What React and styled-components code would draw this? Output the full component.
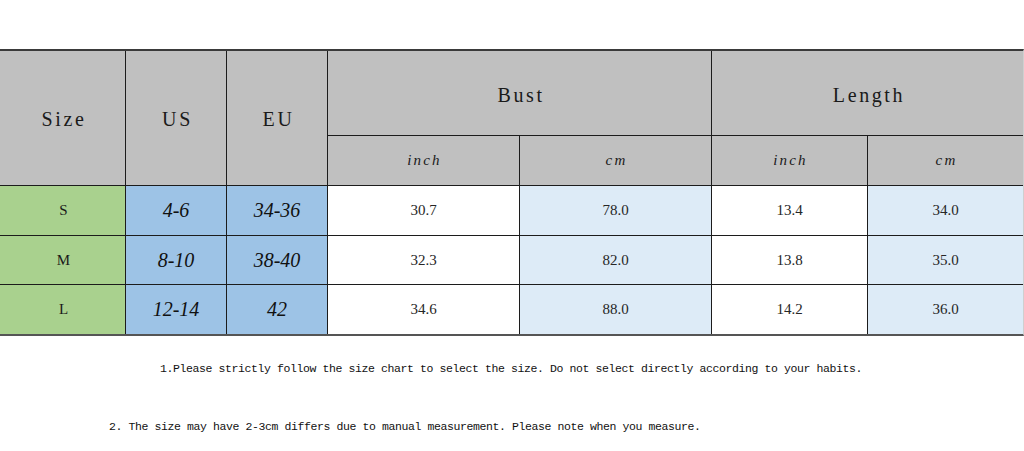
import styled, { createGlobalStyle } from "styled-components";

const GlobalStyle = createGlobalStyle`
  html, body {
    margin: 0;
    padding: 0;
    background: #ffffff;
  }
`;

const rows = [
  { size: "S", us: "4-6", eu: "34-36", bustIn: "30.7", bustCm: "78.0", lenIn: "13.4", lenCm: "34.0" },
  { size: "M", us: "8-10", eu: "38-40", bustIn: "32.3", bustCm: "82.0", lenIn: "13.8", lenCm: "35.0" },
  { size: "L", us: "12-14", eu: "42", bustIn: "34.6", bustCm: "88.0", lenIn: "14.2", lenCm: "36.0" },
];

const Page = styled.div`
  width: 1024px;
  height: 451px;
  overflow: hidden;
  padding-top: 49px;
  box-sizing: border-box;
  background: #ffffff;
`;

const Table = styled.div`
  display: grid;
  width: 1023px;
  grid-template-columns: 125px 100px 100px 191px 191px 155px 155px;
  grid-template-rows: 84px 49px 49px 48px 49px;
  gap: 1px;
  background: #1c1c1c;
  border-top: 2px solid #3a3a3a;
  border-bottom: 2px solid #555555;
  border-right: 1px solid #cfcfcf;
`;

const Row = styled.div`
  display: contents;
`;

const Cell = styled.div`
  display: flex;
  align-items: center;
  justify-content: center;
  color: #1a1a1a;
`;

const Head = styled(Cell)`
  background: #c0c0c0;
  grid-row: span ${(p) => p.$rows || 1};
  grid-column: span ${(p) => p.$cols || 1};
  font-family: "Liberation Serif", serif;
  font-size: 20px;
  letter-spacing: 2.6px;
  padding-left: 3px;
  padding-top: ${(p) => (p.$rows ? 2 : 4)}px;
`;

const Unit = styled(Cell)`
  background: #c0c0c0;
  font-family: "Liberation Serif", serif;
  font-style: italic;
  font-size: 15px;
  letter-spacing: 2.2px;
  padding-left: 2px;
`;

const SizeCell = styled(Cell)`
  background: #a9d18e;
  font-family: "Liberation Serif", serif;
  font-size: 15px;
  padding-left: 2px;
`;

const RegionCell = styled(Cell)`
  background: #9dc3e6;
  font-family: "Liberation Serif", serif;
  font-style: italic;
  font-size: 20px;
  color: #111111;
`;

const ValueCell = styled(Cell)`
  background: ${(p) => (p.$tint ? "#ddebf7" : "#ffffff")};
  font-family: "Liberation Serif", serif;
  font-size: 15px;
  color: #262626;
`;

const Notes = styled.div`
  display: flex;
  flex-direction: column;
  gap: 42px;
  padding-top: 25px;
`;

const Note = styled.p`
  margin: 0;
  padding-left: ${(p) => p.$indent}px;
  font-family: "Liberation Mono", "DejaVu Sans Mono", monospace;
  font-size: 11.5px;
  letter-spacing: -0.4px;
  line-height: 16px;
  color: #111111;
  white-space: nowrap;
`;

const App = () => {
  return (
    <Page>
      <GlobalStyle />
      <Table>
        <Head $rows={2}>Size</Head>
        <Head $rows={2}>US</Head>
        <Head $rows={2}>EU</Head>
        <Head $cols={2}>Bust</Head>
        <Head $cols={2}>Length</Head>
        <Unit>inch</Unit>
        <Unit>cm</Unit>
        <Unit>inch</Unit>
        <Unit>cm</Unit>
        {rows.map((r) => (
          <Row key={r.size}>
            <SizeCell>{r.size}</SizeCell>
            <RegionCell>{r.us}</RegionCell>
            <RegionCell>{r.eu}</RegionCell>
            <ValueCell>{r.bustIn}</ValueCell>
            <ValueCell $tint>{r.bustCm}</ValueCell>
            <ValueCell>{r.lenIn}</ValueCell>
            <ValueCell $tint>{r.lenCm}</ValueCell>
          </Row>
        ))}
      </Table>
      <Notes>
        <Note $indent={160}>
          1.Please strictly follow the size chart to select the size. Do not select directly according to your habits.
        </Note>
        <Note $indent={109}>
          2. The size may have 2-3cm differs due to manual measurement. Please note when you measure.
        </Note>
      </Notes>
    </Page>
  );
};

export default App;
